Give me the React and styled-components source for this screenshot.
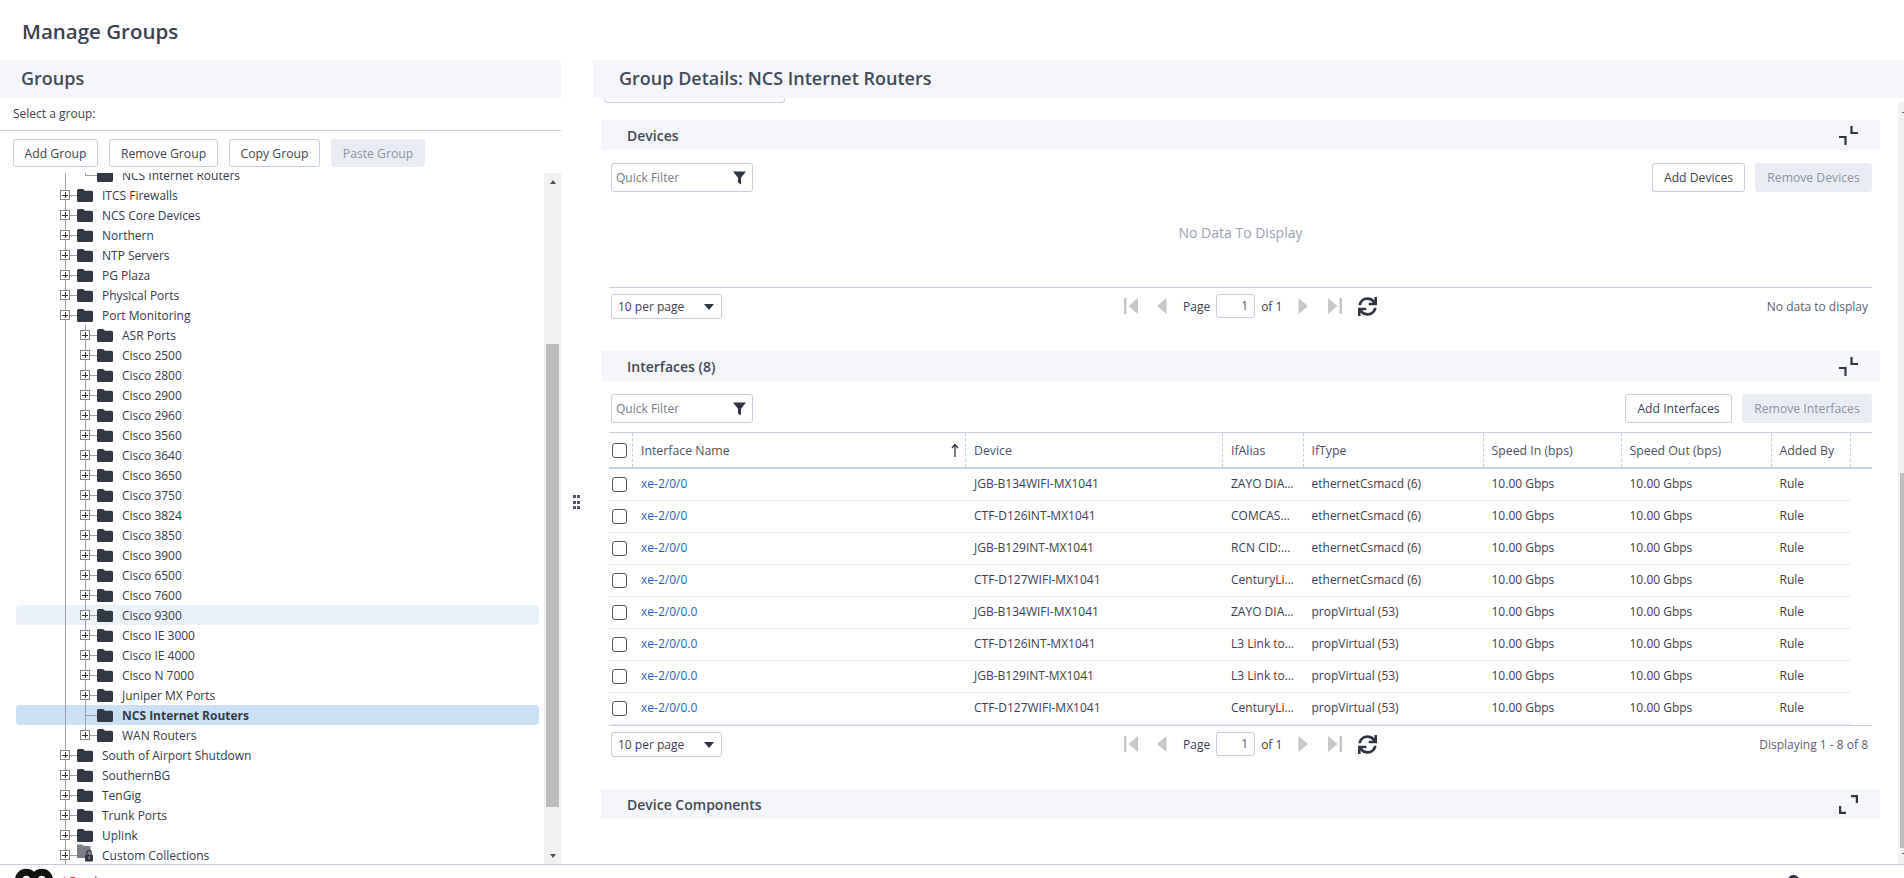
import React from 'react';
import styled, { createGlobalStyle } from 'styled-components';
import { FaSync } from 'react-icons/fa';

const Global = createGlobalStyle`
  html, body { margin: 0; padding: 0; height: 100%; overflow: hidden; background: #fff; }
  body { font-family: "Open Sans", "Liberation Sans", sans-serif; font-size: 12px; color: #3a4150; }
  * { box-sizing: border-box; }
`;

const Page = styled.div`display:flex;flex-direction:column;height:100vh;overflow:hidden;`;
const TitleBar = styled.div`height:60px;flex:none;padding-left:22px;display:flex;align-items:center;padding-top:1px;`;
const Title = styled.h1`margin:0;font-size:20.5px;font-weight:600;color:#3a4150;`;
const Main = styled.div`flex:1;min-height:0;display:flex;`;

const LeftPanel = styled.section`width:561px;flex:none;display:flex;flex-direction:column;min-height:0;`;
const PanelHeader = styled.div`height:38px;flex:none;background:#f5f6fa;display:flex;align-items:center;font-size:18px;font-weight:600;color:#434a58;padding-left:${p => p.$pad}px;padding-bottom:2px;`;
const SelectLabel = styled.div`height:33px;flex:none;border-bottom:1px solid #c5d0de;padding-left:13px;display:flex;align-items:center;padding-bottom:2px;color:#3a4150;`;
const ButtonBar = styled.div`display:flex;gap:11px;padding:8px 13px 6px;flex:none;`;
const Btn = styled.button`
  width:${p => p.$w}px;height:${p => p.$h || 28}px;padding:0;font:500 12.2px "Open Sans","Liberation Sans",sans-serif;
  border-radius:3px;white-space:nowrap;
  border:1px solid ${p => p.disabled ? '#e9edf3' : '#c5d0de'};
  background:${p => p.disabled ? '#e9edf3' : '#fff'};
  color:${p => p.disabled ? '#8b94a3' : '#3a4556'};
`;

const TreeWrap = styled.div`flex:1;min-height:0;display:flex;overflow:hidden;`;
const TreeList = styled.div`flex:1;min-width:0;overflow:hidden;`;
const TreeInner = styled.div`margin-top:-8px;`;
const GUIDE = '#9ea1ac';
const Row = styled.div`
  position:relative;height:20px;margin:0 5px 0 16px;border-radius:4px;display:flex;align-items:center;
  padding-left:${p => 44 + (p.$level - 1) * 20}px;
  background:${p => p.$sel ? '#c9e0f5' : p.$hover ? '#ebf2f7' : 'transparent'};
  font-weight:${p => p.$sel ? 700 : 400};color:#353b49;white-space:nowrap;
  &::before{content:"";position:absolute;left:48.5px;top:0;bottom:0;width:1px;background:${GUIDE};}
  &::after{content:"";display:${p => p.$level === 2 ? 'block' : 'none'};position:absolute;left:68.5px;top:0;
    height:${p => p.$end ? '10px' : '20px'};width:1px;background:${GUIDE};}
`;
const Expander = styled.span`
  position:relative;z-index:1;width:10px;height:10px;flex:none;border:1px solid #85878f;background:#fff;
  &::before{content:"";position:absolute;left:1px;right:1px;top:3.5px;height:1px;background:#333;}
  &::after{content:"";position:absolute;top:1px;bottom:1px;left:3.5px;width:1px;background:#333;}
`;
const Dash = styled.span`width:${p => p.$w}px;height:1px;background:${GUIDE};flex:none;margin-left:${p => p.$ml || 0}px;margin-right:${p => p.$mr || 0}px;position:relative;z-index:1;`;
const FolderSvg = styled.svg`flex:none;width:16px;height:14px;margin-right:9px;position:relative;z-index:1;`;
const Folder = () => (
  <FolderSvg viewBox="0 0 16 14"><path d="M1.5 1H6l2 1.8h6.5A1.5 1.5 0 0 1 16 4.3v8.2a1.5 1.5 0 0 1-1.5 1.5h-13A1.5 1.5 0 0 1 0 12.500V2.500A1.500 1.500 0 0 1 1.500 1z" fill="#333845"/></FolderSvg>
);
const LockFolder = () => (
  <FolderSvg viewBox="0 0 16 14" style={{ overflow: 'visible' }}>
    <path d="M0 -3.500H5L7 -2H12.500A1 1 0 0 1 13.500 -1V10H1A1 1 0 0 1 0 9z" fill="#7c7f86"/>
    <rect x="8" y="6.500" width="8" height="7" rx="1" fill="#333845"/>
    <path d="M9.800 6.500V4.500a2.200 2.200 0 0 1 4.400 0v2" fill="none" stroke="#333845" strokeWidth="1.300"/>
    <rect x="11.400" y="8.500" width="1.200" height="2.500" fill="#9a9ca2"/>
  </FolderSvg>
);

const Track = styled.div`flex:none;display:flex;flex-direction:column;overflow:hidden;background:#f1f1f1;
  width:${p => p.$w}px;margin-top:${p => p.$mt || 0}px;align-items:${p => p.$narrow ? 'flex-end' : 'center'};`;
const ArrowBox = styled.div`height:17px;flex:none;display:flex;align-items:center;justify-content:center;margin-top:${p => p.$auto ? 'auto' : 0};`;
const ArrowTri = styled.div`width:0;height:0;border-left:3.500px solid transparent;border-right:3.500px solid transparent;
  ${p => p.$up ? 'border-bottom:4px solid #505050;' : 'border-top:4px solid #505050;'}`;
const Thumb = styled.div`flex:none;background:#bdbdbd;width:${p => p.$w}px;height:${p => p.$h}px;margin-top:${p => p.$mt}px;`;
const Tip = styled.div`flex:none;width:2px;height:1px;background:#666;margin-top:${p => p.$mt}px;`;

const Splitter = styled.div`width:32px;flex:none;display:flex;align-items:center;justify-content:center;margin-top:80px;`;
const Grip = styled.div`display:grid;grid-template-columns:2.500px 2.500px;gap:2.500px 1.500px;margin-left:-1px;
  i{display:block;width:2.500px;height:3px;background:#50566a;}`;

const RightPanel = styled.section`flex:1;min-width:0;display:flex;flex-direction:column;`;
const RightBody = styled.div`flex:1;min-height:0;display:flex;`;
const Content = styled.div`flex:1;min-width:0;overflow:hidden;padding:0 18px 0 8px;`;
const ClippedCard = styled.div`height:5px;width:181px;margin-left:3px;border:1px solid #c5d0de;border-top:none;border-radius:0 0 4px 4px;`;
const SectionHeader = styled.div`height:30px;background:#f5f6fa;display:flex;align-items:center;justify-content:space-between;padding:0 22px 0 26px;
  margin-top:${p => p.$mt}px;font-size:14px;font-weight:600;color:#434a58;`;
const SectionBody = styled.div`padding:0 8px;`;
const Toolbar = styled.div`display:flex;justify-content:space-between;align-items:center;padding-left:2px;margin-top:13px;height:29px;`;
const FilterBox = styled.div`width:142px;height:29px;border:1px solid #c5d0de;border-radius:3px;display:flex;align-items:center;justify-content:space-between;padding:0 6px 0 4px;color:#767d88;`;
const ToolButtons = styled.div`display:flex;gap:10px;`;
const Empty = styled.div`height:95px;padding-bottom:15px;display:flex;align-items:center;justify-content:center;font-size:14px;color:#9aa3b5;`;

const Pager = styled.div`border-top:1px solid #c5d0de;padding-top:6px;display:grid;grid-template-columns:515px auto 1fr;align-items:start;`;
const PerPage = styled.div`margin-left:2px;width:111px;height:25px;border:1px solid #c5d0de;border-radius:3px;display:flex;align-items:center;justify-content:space-between;padding:0 7px 0 6px;color:#3a4150;`;
const SelectArrow = styled.div`width:0;height:0;border-left:5.500px solid transparent;border-right:5.500px solid transparent;border-top:6px solid #2f3542;`;
const PagerNav = styled.div`display:flex;align-items:center;height:24px;color:#3a4150;`;
const Slot = styled.span`display:flex;align-items:center;margin-left:${p => p.$ml || 0}px;white-space:nowrap;`;
const PageInput = styled.div`width:39px;height:24px;border:1px solid #c5d0de;border-radius:3px;text-align:right;padding-right:6px;line-height:22px;color:#555c68;`;
const PagerInfo = styled.div`text-align:right;padding-right:4px;padding-top:4px;color:#5a6270;`;
const Refresh = styled(FaSync)`width:19px;height:19px;color:#2f3542;`;

const COLS = '24px 333px 257px 80.5px 180px 138px 150px 79.5px';
const TableHead = styled.div`margin-top:9px;border-top:1px solid #c5d0de;border-bottom:2px solid #c5d5e6;height:37px;display:grid;grid-template-columns:${COLS} 1fr;`;
const HeadCell = styled.div`border-right:${p => p.$last ? 'none' : '1px dashed #c5d0de'};display:flex;align-items:center;justify-content:space-between;
  padding:0 6px 0 ${p => p.$first ? 3 : 8}px;color:#4a5361;min-width:0;font-size:12.3px;white-space:nowrap;`;
const CheckHead = styled(HeadCell)`padding-right:0;`;
const TableRow = styled.div`height:32px;width:1241.500px;display:grid;grid-template-columns:${COLS};border-bottom:1px solid #ebeef2;align-items:center;`;
const CheckCell = styled.div`padding-left:3px;display:flex;`;
const Cell = styled.div`padding:0 8px 3px;min-width:0;white-space:nowrap;overflow:hidden;color:#3a4150;`;
const LinkCell = styled(Cell)`color:#2a5fc4;`;
const Checkbox = styled.span`display:block;flex:none;width:15px;height:15px;border:1px solid #555;border-radius:3px;background:#fff;`;

const Footer = styled.footer`height:14px;flex:none;border-top:1px solid #c5d0de;overflow:hidden;display:flex;align-items:flex-start;padding-left:15px;`;
const LogoSvg = styled.svg`flex:none;width:38px;height:20px;margin-top:3px;`;
const Brand = styled.span`margin:10px 0 0 10px;color:#c0272d;font-size:12px;line-height:14px;`;
const UserSvg = styled.svg`flex:none;width:11px;height:14px;margin:10px 105px 0 auto;`;

const tree = [
  ['NCS Internet Routers', 2, { leaf: 1, end: 1 }],
  ['ITCS Firewalls', 1], ['NCS Core Devices', 1], ['Northern', 1], ['NTP Servers', 1], ['PG Plaza', 1], ['Physical Ports', 1], ['Port Monitoring', 1],
  ['ASR Ports', 2], ['Cisco 2500', 2], ['Cisco 2800', 2], ['Cisco 2900', 2], ['Cisco 2960', 2], ['Cisco 3560', 2], ['Cisco 3640', 2], ['Cisco 3650', 2],
  ['Cisco 3750', 2], ['Cisco 3824', 2], ['Cisco 3850', 2], ['Cisco 3900', 2], ['Cisco 6500', 2], ['Cisco 7600', 2],
  ['Cisco 9300', 2, { hover: 1 }], ['Cisco IE 3000', 2], ['Cisco IE 4000', 2], ['Cisco N 7000', 2], ['Juniper MX Ports', 2],
  ['NCS Internet Routers', 2, { leaf: 1, sel: 1 }], ['WAN Routers', 2, { end: 1 }],
  ['South of Airport Shutdown', 1], ['SouthernBG', 1], ['TenGig', 1], ['Trunk Ports', 1], ['Uplink', 1], ['Custom Collections', 1, { lock: 1 }],
];

const rows = [
  ['xe-2/0/0', 'JGB-B134WIFI-MX1041', 'ZAYO DIA…', 'ethernetCsmacd (6)'],
  ['xe-2/0/0', 'CTF-D126INT-MX1041', 'COMCAS…', 'ethernetCsmacd (6)'],
  ['xe-2/0/0', 'JGB-B129INT-MX1041', 'RCN CID:…', 'ethernetCsmacd (6)'],
  ['xe-2/0/0', 'CTF-D127WIFI-MX1041', 'CenturyLi…', 'ethernetCsmacd (6)'],
  ['xe-2/0/0.0', 'JGB-B134WIFI-MX1041', 'ZAYO DIA…', 'propVirtual (53)'],
  ['xe-2/0/0.0', 'CTF-D126INT-MX1041', 'L3 Link to…', 'propVirtual (53)'],
  ['xe-2/0/0.0', 'JGB-B129INT-MX1041', 'L3 Link to…', 'propVirtual (53)'],
  ['xe-2/0/0.0', 'CTF-D127WIFI-MX1041', 'CenturyLi…', 'propVirtual (53)'],
];

const Funnel = () => (
  <svg width="13" height="14" viewBox="0 0 13 14"><path d="M0 .5h13L8 6.800V13.500L5 11.500V6.800z" fill="#2f3542"/></svg>
);
const Collapse = () => (
  <svg width="19" height="19" viewBox="0 0 19 19" fill="none" stroke="#2f3542" strokeWidth="2.200">
    <path d="M12.500 0V7H19"/><path d="M0 11H6.500V19"/>
  </svg>
);
const Expand = () => (
  <svg width="19" height="19" viewBox="0 0 19 19" fill="none" stroke="#2f3542" strokeWidth="2.200">
    <path d="M12 1.100H17.900V8"/><path d="M1.100 11V17.900H7"/>
  </svg>
);
const G = '#c6c6c6';
const First = () => <svg width="14" height="16" viewBox="0 0 14 16"><rect width="2.500" height="16" fill={G}/><path d="M14 0V16L4.500 8z" fill={G}/></svg>;
const Prev = () => <svg width="10" height="16" viewBox="0 0 10 16"><path d="M9.500 0V16L0 8z" fill={G}/></svg>;
const Next = () => <svg width="10" height="16" viewBox="0 0 10 16"><path d="M.500 0V16L10 8z" fill={G}/></svg>;
const Last = () => <svg width="14" height="16" viewBox="0 0 14 16"><rect x="11.500" width="2.500" height="16" fill={G}/><path d="M0 0V16L9.500 8z" fill={G}/></svg>;

const PagerBar = ({ info }) => (
  <Pager>
    <PerPage>10 per page<SelectArrow /></PerPage>
    <PagerNav>
      <Slot><First /></Slot>
      <Slot $ml={19}><Prev /></Slot>
      <Slot $ml={16}>Page</Slot>
      <Slot $ml={6}><PageInput>1</PageInput></Slot>
      <Slot $ml={6}>of 1</Slot>
      <Slot $ml={16}><Next /></Slot>
      <Slot $ml={20}><Last /></Slot>
      <Slot $ml={16}><Refresh /></Slot>
    </PagerNav>
    <PagerInfo>{info}</PagerInfo>
  </Pager>
);

export default function App() {
  return (
    <Page>
      <Global />
      <TitleBar><Title>Manage Groups</Title></TitleBar>
      <Main>
        <LeftPanel>
          <PanelHeader $pad={21}>Groups</PanelHeader>
          <SelectLabel>Select a group:</SelectLabel>
          <ButtonBar>
            <Btn $w={85}>Add Group</Btn>
            <Btn $w={109}>Remove Group</Btn>
            <Btn $w={91}>Copy Group</Btn>
            <Btn $w={94} disabled>Paste Group</Btn>
          </ButtonBar>
          <TreeWrap>
            <TreeList>
              <TreeInner>
                {tree.map(([label, level, o = {}], i) => (
                  <Row key={i} $level={level} $sel={o.sel} $hover={o.hover} $end={o.end}>
                    {o.leaf ? <Dash $w={12} $ml={5} /> : <><Expander /><Dash $w={7} /></>}
                    {o.lock ? <LockFolder /> : <Folder />}
                    {label}
                  </Row>
                ))}
              </TreeInner>
            </TreeList>
            <Track $w={17}>
              <ArrowBox><ArrowTri $up /></ArrowBox>
              <Thumb $w={13} $h={463} $mt={154} />
              <ArrowBox $auto><ArrowTri /></ArrowBox>
            </Track>
          </TreeWrap>
        </LeftPanel>
        <Splitter><Grip>{[0, 1, 2, 3, 4, 5].map(i => <i key={i} />)}</Grip></Splitter>
        <RightPanel>
          <PanelHeader $pad={26}>Group Details: NCS Internet Routers</PanelHeader>
          <RightBody>
            <Content>
              <ClippedCard />
              <SectionHeader $mt={17}>Devices<Collapse /></SectionHeader>
              <SectionBody>
                <Toolbar>
                  <FilterBox>Quick Filter<Funnel /></FilterBox>
                  <ToolButtons>
                    <Btn $w={93} $h={29}>Add Devices</Btn>
                    <Btn $w={117} $h={29} disabled>Remove Devices</Btn>
                  </ToolButtons>
                </Toolbar>
                <Empty>No Data To Display</Empty>
                <PagerBar info="No data to display" />
              </SectionBody>
              <SectionHeader $mt={32}>Interfaces (8)<Collapse /></SectionHeader>
              <SectionBody>
                <Toolbar>
                  <FilterBox>Quick Filter<Funnel /></FilterBox>
                  <ToolButtons>
                    <Btn $w={107} $h={29}>Add Interfaces</Btn>
                    <Btn $w={130} $h={29} disabled>Remove Interfaces</Btn>
                  </ToolButtons>
                </Toolbar>
                <TableHead>
                  <CheckHead $first><Checkbox /></CheckHead>
                  <HeadCell>Interface Name<svg width="8" height="13" viewBox="0 0 8 13"><path d="M4 13V1M1 4l3-3.500L7 4" fill="none" stroke="#2f3542" strokeWidth="1.300"/></svg></HeadCell>
                  <HeadCell>Device</HeadCell>
                  <HeadCell>IfAlias</HeadCell>
                  <HeadCell>IfType</HeadCell>
                  <HeadCell>Speed In (bps)</HeadCell>
                  <HeadCell>Speed Out (bps)</HeadCell>
                  <HeadCell>Added By</HeadCell>
                  <HeadCell $last />
                </TableHead>
                {rows.map((r, i) => (
                  <TableRow key={i}>
                    <CheckCell><Checkbox /></CheckCell>
                    <LinkCell>{r[0]}</LinkCell>
                    <Cell>{r[1]}</Cell>
                    <Cell>{r[2]}</Cell>
                    <Cell>{r[3]}</Cell>
                    <Cell>10.00 Gbps</Cell>
                    <Cell>10.00 Gbps</Cell>
                    <Cell>Rule</Cell>
                  </TableRow>
                ))}
                <PagerBar info="Displaying 1 - 8 of 8" />
              </SectionBody>
              <SectionHeader $mt={32}>Device Components<Expand /></SectionHeader>
            </Content>
            <Track $w={6} $mt={4} $narrow>
              <Tip $mt={10} />
              <Thumb $w={4} $h={375} $mt={360} />
              <Tip $mt={5} />
            </Track>
          </RightBody>
        </RightPanel>
      </Main>
      <Footer>
        <LogoSvg viewBox="0 0 38 20"><path d="M3.500 18v-6a7.500 7.500 0 0 1 15.500 0 7.500 7.500 0 0 1 15.500 0v6" fill="none" stroke="#111" strokeWidth="7"/></LogoSvg>
        <Brand>i Read</Brand>
        <UserSvg viewBox="0 0 11 14"><ellipse cx="5.500" cy="5" rx="5.500" ry="5" fill="#2f3542"/></UserSvg>
      </Footer>
    </Page>
  );
}
